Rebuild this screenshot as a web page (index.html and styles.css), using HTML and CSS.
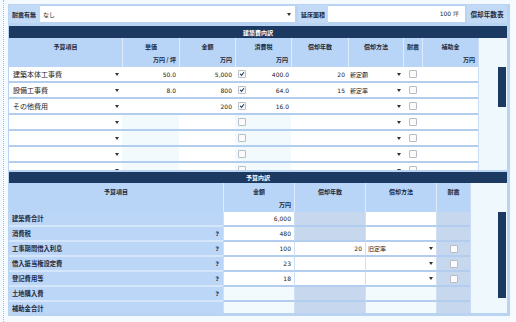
FILE: index.html
```html
<!DOCTYPE html>
<html lang="ja">
<head>
<meta charset="utf-8">
<link rel="stylesheet" href="styles.css">
</head>
<body>
<div class="page">
  <div class="panel">
    <div class="topbar">
      <div class="lbl w31">耐震有無</div>
      <div class="fld sel">なし<i class="dd"></i></div>
      <div class="lbl w30 ml3">延床面積</div>
      <div class="fld inp">100 坪</div>
      <div class="btn">償却年数表</div>
    </div>

    <div class="sec s1">
      <div class="bar">建築費内訳</div>
      <div class="body b1">
        <div class="tbl t1">
          <div class="row head">
            <div class="hc"><span>予算項目</span></div>
            <div class="hc"><span>単価</span><em>万円 / 坪</em></div>
            <div class="hc"><span>金額</span><em>万円</em></div>
            <div class="hc"><span>消費税</span><em>万円</em></div>
            <div class="hc"><span>償却年数</span></div>
            <div class="hc"><span>償却方法</span></div>
            <div class="hc"><span>耐震</span></div>
            <div class="hc"><span>補助金</span><em>万円</em></div>
          </div>
          <div class="rows">
            <div class="row">
              <div class="c item">建築本体工事費<i class="dd"></i></div>
              <div class="c num">50.0</div>
              <div class="c num">5,000</div>
              <div class="c tax"><span class="cb"><svg viewBox="0 0 8 8"><path d="M1.6 3.9 L3.4 5.9 L6.6 1.6"/></svg></span><span class="n">400.0</span></div>
              <div class="c num">20</div>
              <div class="c meth">新定額<i class="dd"></i></div>
              <div class="c ck"><span class="cb"></span></div>
              <div class="c num"></div>
            </div>
            <div class="row">
              <div class="c item">設備工事費<i class="dd"></i></div>
              <div class="c num">8.0</div>
              <div class="c num">800</div>
              <div class="c tax"><span class="cb"><svg viewBox="0 0 8 8"><path d="M1.6 3.9 L3.4 5.9 L6.6 1.6"/></svg></span><span class="n">64.0</span></div>
              <div class="c num">15</div>
              <div class="c meth">新定率<i class="dd"></i></div>
              <div class="c ck"><span class="cb"></span></div>
              <div class="c num"></div>
            </div>
            <div class="row">
              <div class="c item">その他費用<i class="dd"></i></div>
              <div class="c num"></div>
              <div class="c num">200</div>
              <div class="c tax"><span class="cb"><svg viewBox="0 0 8 8"><path d="M1.6 3.9 L3.4 5.9 L6.6 1.6"/></svg></span><span class="n">16.0</span></div>
              <div class="c num"></div>
              <div class="c meth"><i class="dd"></i></div>
              <div class="c ck"><span class="cb"></span></div>
              <div class="c num"></div>
            </div>
            <div class="row">
              <div class="c item"><i class="dd"></i></div>
              <div class="c num lt"></div>
              <div class="c num"></div>
              <div class="c tax lt"><span class="cb"></span></div>
              <div class="c num"></div>
              <div class="c meth"><i class="dd"></i></div>
              <div class="c ck"><span class="cb"></span></div>
              <div class="c num"></div>
            </div>
            <div class="row">
              <div class="c item"><i class="dd"></i></div>
              <div class="c num lt"></div>
              <div class="c num"></div>
              <div class="c tax lt"><span class="cb"></span></div>
              <div class="c num"></div>
              <div class="c meth"><i class="dd"></i></div>
              <div class="c ck"><span class="cb"></span></div>
              <div class="c num"></div>
            </div>
            <div class="row">
              <div class="c item"><i class="dd"></i></div>
              <div class="c num lt"></div>
              <div class="c num"></div>
              <div class="c tax lt"><span class="cb"></span></div>
              <div class="c num"></div>
              <div class="c meth"><i class="dd"></i></div>
              <div class="c ck"><span class="cb"></span></div>
              <div class="c num"></div>
            </div>
            <div class="row">
              <div class="c item"><i class="dd"></i></div>
              <div class="c num lt"></div>
              <div class="c num"></div>
              <div class="c tax lt"><span class="cb"></span></div>
              <div class="c num"></div>
              <div class="c meth"><i class="dd"></i></div>
              <div class="c ck"><span class="cb"></span></div>
              <div class="c num"></div>
            </div>
          </div>
        </div>
        <div class="scroll"><div class="thumb th1"></div></div>
      </div>
    </div>

    <div class="sec s2">
      <div class="bar b2bar">予算内訳</div>
      <div class="body b2">
        <div class="tbl t2">
          <div class="row head">
            <div class="hc"><span>予算項目</span></div>
            <div class="hc"><span>金額</span><em>万円</em></div>
            <div class="hc"><span>償却年数</span></div>
            <div class="hc"><span>償却方法</span></div>
            <div class="hc"><span>耐震</span></div>
          </div>
          <div class="rows">
            <div class="row">
              <div class="c lab">建築費合計</div>
              <div class="c num">6,000</div>
              <div class="c gr"></div>
              <div class="c"></div>
              <div class="c gr"></div>
            </div>
            <div class="row">
              <div class="c lab">消費税<b>?</b></div>
              <div class="c num">480</div>
              <div class="c gr"></div>
              <div class="c"></div>
              <div class="c gr"></div>
            </div>
            <div class="row">
              <div class="c lab">工事期間借入利息<b>?</b></div>
              <div class="c num">100</div>
              <div class="c num">20</div>
              <div class="c meth">旧定率<i class="dd"></i></div>
              <div class="c gr ck"><span class="cb"></span></div>
            </div>
            <div class="row">
              <div class="c lab">借入抵当権設定費<b>?</b></div>
              <div class="c num">23</div>
              <div class="c"></div>
              <div class="c meth"><i class="dd"></i></div>
              <div class="c gr ck"><span class="cb"></span></div>
            </div>
            <div class="row">
              <div class="c lab">登記費用等<b>?</b></div>
              <div class="c num">18</div>
              <div class="c"></div>
              <div class="c meth"><i class="dd"></i></div>
              <div class="c gr ck"><span class="cb"></span></div>
            </div>
            <div class="row">
              <div class="c lab">土地購入費<b>?</b></div>
              <div class="c lt"></div>
              <div class="c gr"></div>
              <div class="c lt"></div>
              <div class="c gr"></div>
            </div>
            <div class="row">
              <div class="c lab">補助金合計</div>
              <div class="c lt"></div>
              <div class="c gr"></div>
              <div class="c lt"></div>
              <div class="c gr"></div>
            </div>
          </div>
        </div>
        <div class="scroll"><div class="thumb th2"></div></div>
      </div>
    </div>
  </div>
</div>
</body>
</html>
```

FILE: styles.css
```css
* { box-sizing: border-box; margin: 0; padding: 0; }

body {
  width: 516px;
  height: 322px;
  overflow: hidden;
  background: #f5fafe;
  font-family: "Noto Sans CJK JP", "Noto Sans", sans-serif;
  color: #222;
}

.page {
  margin-left: 3px;
  border-left: 1px dotted #b3bac3;
  padding: 4px 0 0 4px;
  height: 322px;
}

.panel {
  width: 502px;
  background: #b9d3f2;
  padding: 1px 3px 3px 1px;
}

/* top bar */
.topbar {
  display: flex;
  align-items: center;
  height: 18px;
}
.lbl {
  height: 18px;
  display: flex;
  align-items: center;
  padding-left: 3px;
  font-size: 6px;
  font-weight: bold;
  color: #1e2a3c;
  background: #c3daf6;
}
.w31 { width: 31px; }
.w30 { width: 30px; }
.ml3 { margin-left: 3px; }
.fld {
  height: 16px;
  background: #fff;
  display: flex;
  align-items: center;
  font-size: 6px;
}
.sel { width: 255px; padding: 0 4px 0 3px; }
.inp { width: 137px; justify-content: flex-end; padding-right: 6px; font-family: "DejaVu Sans", sans-serif; font-size: 6px; }
.btn {
  width: 40px;
  margin-left: 2px;
  height: 18px;
  display: flex;
  align-items: center;
  justify-content: center;
  font-size: 6.6px;
  font-weight: bold;
  color: #1e2a3c;
  background: #c3daf6;
}

.dd {
  width: 0;
  height: 0;
  margin-left: auto;
  border-left: 2.5px solid transparent;
  border-right: 2.5px solid transparent;
  border-top: 3px solid #333;
}

/* sections */
.s1 { margin-top: 3px; }
.s2 { margin-top: 2px; }
.bar {
  height: 12px;
  background: #1c3962;
  color: #fff;
  font-size: 6px;
  font-weight: bold;
  display: flex;
  align-items: center;
  justify-content: center;
}
.b2bar { height: 11px; }

.body { display: flex; }
.b1 { height: 132px; }
.b2 { height: 130px; }

.tbl { display: flex; flex-direction: column; overflow: hidden; }
.t1 { width: 469px; }
.t2 { width: 461px; }

.row { display: grid; }
.t1 .row { grid-template-columns: 113px 57px 56px 56px 57px 55px 19px 56px; }
.t2 .row { grid-template-columns: 214px 71px 71px 71px 34px; }

.head { height: 29px; background: #b8d4f7; flex: none; }
.hc {
  display: flex;
  flex-direction: column;
  justify-content: space-between;
  padding: 4px 3px 3px;
  border-left: 1px solid #deebfa;
  font-size: 6px;
  font-weight: bold;
  color: #1e2a3c;
}
.hc:first-child { border-left: none; }
.hc span { align-self: center; }
.hc em { align-self: flex-end; font-style: normal; }

.rows { flex: 1; overflow: hidden; }

.t1 .rows .row { height: 16px; }
.t2 .rows .row { height: 15px; }

.c {
  display: flex;
  align-items: center;
  padding: 0 3px;
  background: #fff;
  border-bottom: 2px solid #b3cdef;
  font-size: 7px;
}
.t2 .c { border-left: 1px solid #cfe0f5; }

.num {
  justify-content: flex-end;
  font-family: "DejaVu Sans", sans-serif;
  font-size: 6px;
}
.lt { background: #f3fafe; }
.gr { background: #c7d8ee; }

.item { padding: 0 3px 0 4px; }
.meth { padding: 0 2px 0 2px; font-size: 6px; }
.t2 .meth { padding: 0 3px 0 2px; }
.tax { padding: 0 2px 0 3px; }
.tax .n {
  margin-left: auto;
  font-family: "DejaVu Sans", sans-serif;
  font-size: 6px;
}
.ck { justify-content: center; padding: 0; }

.cb {
  width: 8px;
  height: 8px;
  border: 1px solid #b8bec6;
  border-radius: 1px;
  background: #fbfbfb;
  display: flex;
}
.cb svg { width: 6px; height: 6px; }
.cb path { fill: none; stroke: #1c3962; stroke-width: 1.4; }

.lab {
  background: #bcd6f7;
  border-bottom: 2px solid #d6e6fa;
  font-size: 6.3px;
  font-weight: bold;
  color: #1e2a3c;
  padding: 0 4px 0 3px;
}
.t2 .lab { border-left: none; }
.lab b {
  margin-left: auto;
  font-family: "DejaVu Sans", sans-serif;
  font-size: 6px;
}

/* scroll */
.scroll {
  flex: 1;
  background: #eef8fd;
  border-left: 1px solid #c8dcf3;
  display: flex;
  justify-content: flex-end;
  padding: 29px 1px 0 0;
}
.thumb { width: 8px; background: #1c3962; }
.th1 { height: 40px; }
.th2 { height: 86px; }
```
